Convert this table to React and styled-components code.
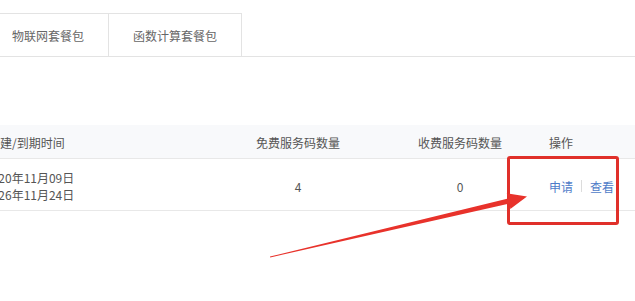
import React from 'react';
import styled, { createGlobalStyle } from 'styled-components';

const GlobalStyle = createGlobalStyle`
  html, body {
    margin: 0;
    padding: 0;
    background: #fff;
    overflow: hidden;
  }
  body {
    font-family: "Noto Sans CJK SC", "Liberation Sans", sans-serif;
    font-size: 12px;
    color: #555;
  }
`;

const packages = [
  { id: 'iot', label: '物联网套餐包' },
  { id: 'fc', label: '函数计算套餐包' },
];

const rows = [
  { created: '2020年11月09日', expires: '2026年11月24日', free: 4, paid: 0 },
];

export default function App() {
  return (
    <>
      <GlobalStyle />
      <Page>
        <TabBar>
          {packages.map((p) => (
            <Tab key={p.id}>{p.label}</Tab>
          ))}
        </TabBar>
        <Table>
          <HeadRow>
            <Cell>创建/到期时间</Cell>
            <Cell center>免费服务码数量</Cell>
            <Cell center>收费服务码数量</Cell>
            <Cell action>操作</Cell>
          </HeadRow>
          {rows.map((r, i) => (
            <BodyRow key={i}>
              <Cell>
                <Dates>
                  <span>{r.created}</span>
                  <span>{r.expires}</span>
                </Dates>
              </Cell>
              <Cell center>{r.free}</Cell>
              <Cell center>{r.paid}</Cell>
              <Cell action>
                <Actions>
                  <Link>申请</Link>
                  <Divider />
                  <Link>查看</Link>
                </Actions>
              </Cell>
            </BodyRow>
          ))}
        </Table>
        <Highlight />
        <Pointer viewBox="0 0 635 301" width="635" height="301">
          <polygon
            points="270,256.6 509.2,198.2 506.7,193.3 527,196.5 510.3,208.9 509.6,203.6 270.2,257.4"
            fill="#e8322b"
          />
        </Pointer>
      </Page>
    </>
  );
}

const Page = styled.div`
  position: relative;
  width: 635px;
  height: 301px;
  overflow: hidden;
  padding-top: 13px;
  box-sizing: border-box;
`;

const TabBar = styled.div`
  display: flex;
  margin-left: -13px;
  border-bottom: 1px solid #e3e3e3;
`;

const Tab = styled.div`
  height: 42px;
  padding: 0 24px;
  display: flex;
  align-items: center;
  color: #666;
  border: 1px solid #e3e3e3;
  border-bottom: none;
  & + & {
    border-left: none;
  }
`;

const Table = styled.div`
  margin-top: 68px;
  margin-left: -28px;
`;

const rowGrid = `
  display: grid;
  grid-template-columns: 248px 156px 168px 1fr;
  align-items: center;
  border-bottom: 1px solid #e8e8e8;
`;

const HeadRow = styled.div`
  ${rowGrid}
  height: 34px;
  padding-top: 1px;
  box-sizing: border-box;
  background: #f8f9fb;
  color: #555;
`;

const BodyRow = styled.div`
  ${rowGrid}
  height: 52px;
  padding-top: 3px;
  box-sizing: border-box;
  color: #555;
`;

const Cell = styled.div`
  padding: ${({ action }) => (action ? '0 0 0 5px' : '0 16px')};
  text-align: ${({ center }) => (center ? 'center' : 'left')};
  white-space: nowrap;
`;

const Dates = styled.div`
  display: flex;
  flex-direction: column;
  line-height: 17px;
  margin-left: -3px;
`;

const Actions = styled.div`
  display: flex;
  align-items: center;
  gap: 8px;
`;

const Link = styled.span`
  color: #4f7cc8;
  cursor: pointer;
`;

const Divider = styled.span`
  width: 1px;
  height: 12px;
  background: #dcdcdc;
`;

const Highlight = styled.div`
  position: absolute;
  left: 507px;
  top: 156px;
  width: 112px;
  height: 69px;
  box-sizing: border-box;
  border: 3px solid #e0302a;
  border-radius: 3px;
`;

const Pointer = styled.svg`
  position: absolute;
  left: 0;
  top: 0;
  pointer-events: none;
`;
